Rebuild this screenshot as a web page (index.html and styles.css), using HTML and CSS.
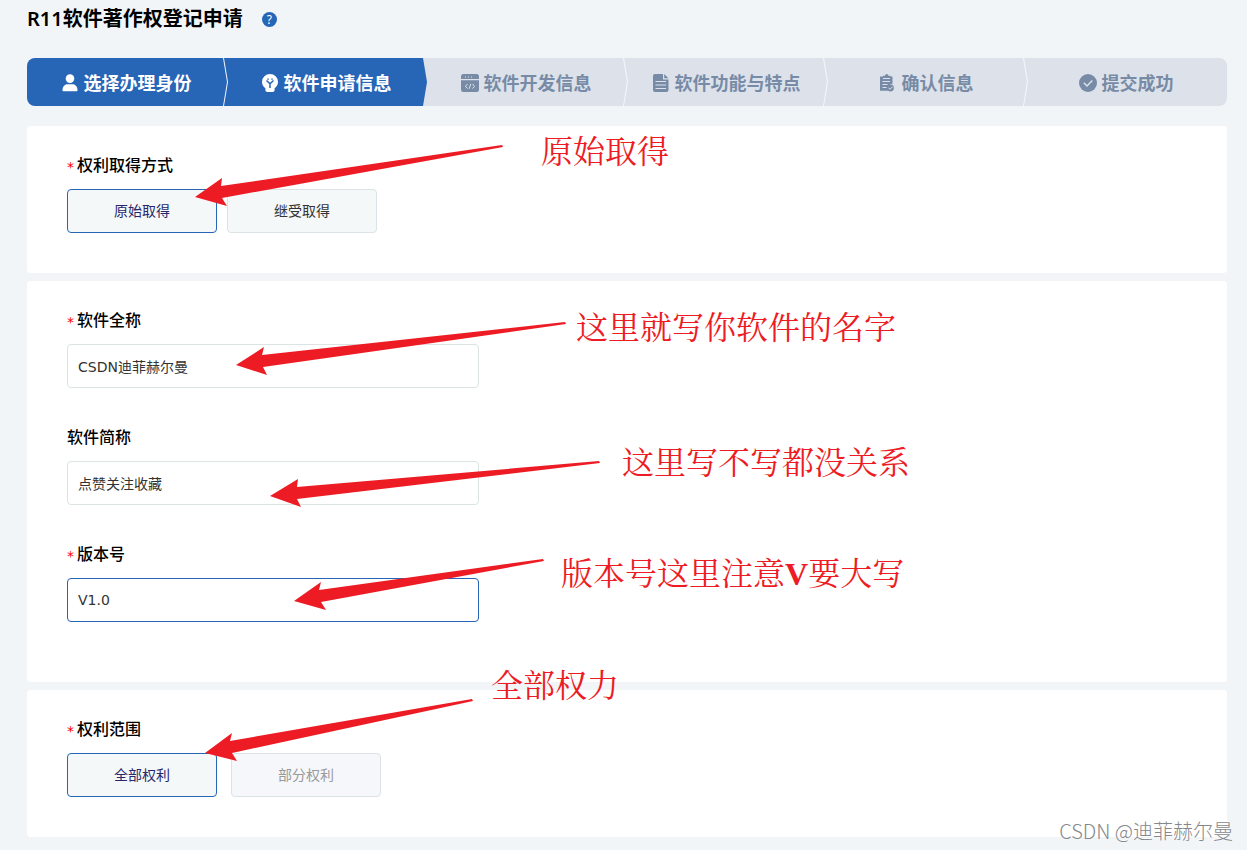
FILE: index.html
```html
<!DOCTYPE html>
<html lang="zh-CN">
<head>
<meta charset="utf-8">
<meta name="viewport" content="width=device-width, initial-scale=1">
<title>R11软件著作权登记申请</title>
<link rel="stylesheet" href="styles.css">
</head>
<body>
<main class="page">
  <header class="page-head">
    <h1 class="title">R11软件著作权登记申请</h1>
    <button class="help" type="button" aria-label="帮助">?</button>
  </header>

  <ol class="steps">
    <li class="step step-on">
      <svg class="step-icon" viewBox="0 0 18 18" aria-hidden="true"><circle cx="9" cy="4.600" r="4.300"/><path d="M1.500 16.200c0-3.600 2-6 5-6h5c3 0 5 2.400 5 6 0 .7-.4 1.100-1 1.100h-13c-.6 0-1-.4-1-1.100z"/></svg>
      <span>选择办理身份</span>
      <svg class="step-edge" viewBox="0 0 5 48" aria-hidden="true"><path class="edge-line" d="M.5 0 4.500 24 .5 48"/></svg>
    </li>
    <li class="step step-on" aria-current="step">
      <svg class="step-icon" viewBox="0 0 18 18" aria-hidden="true"><path d="M9 0a8 8 0 0 1 8 8c0 2.700-1.300 4.800-3.400 6.200V16c0 1.200-.8 2-2 2H6.400c-1.200 0-2-.8-2-2v-1.800C2.300 12.800 1 10.700 1 8a8 8 0 0 1 8-8z"/><path class="cut cut-bulb" d="M5.500 6.500 9 9.800l3.500-3.300M9 9.800V14M7 4.600v1.200M11 4.600v1.200"/></svg>
      <span>软件申请信息</span>
      <svg class="step-edge" viewBox="0 0 5 48" aria-hidden="true"><path class="edge-next" d="M0 0 4 24 0 48H5V0z"/></svg>
    </li>
    <li class="step">
      <svg class="step-icon" viewBox="0 0 18 18" aria-hidden="true"><path d="M2.500 0h13A2.500 2.500 0 0 1 18 2.500V5H0V2.500A2.500 2.500 0 0 1 2.500 0zM0 6.300h18v9.200a2.500 2.500 0 0 1-2.500 2.500h-13A2.500 2.500 0 0 1 0 15.500z"/><path class="cut" d="M4 3h1M7 3h1M10 3h1M6.500 10 4.500 12.300l2 2.300M11.500 10l2 2.300-2 2.300M9.800 9.800l-1.600 5"/></svg>
      <span>软件开发信息</span>
      <svg class="step-edge" viewBox="0 0 5 48" aria-hidden="true"><path class="edge-line" d="M.5 0 4.500 24 .5 48"/></svg>
    </li>
    <li class="step">
      <svg class="step-icon" viewBox="0 0 18 18" aria-hidden="true"><path d="M3 0h8v5.500h5.500V16a2 2 0 0 1-2 2H3a2 2 0 0 1-2-2V2a2 2 0 0 1 2-2zM12.200 0l4.300 4.300h-4.300z"/><path class="cut" d="M3.500 7.500h10.500M3.500 11h10.500M3.500 14.500h10.500"/></svg>
      <span>软件功能与特点</span>
      <svg class="step-edge" viewBox="0 0 5 48" aria-hidden="true"><path class="edge-line" d="M.5 0 4.500 24 .5 48"/></svg>
    </li>
    <li class="step">
      <svg class="step-icon" viewBox="0 0 18 18" aria-hidden="true"><path d="M1 2.500h3V1.800h2a1.700 1.700 0 0 1 3.400 0h2v.7h2.100v7.300c-2.800.1-4.700 2-4.700 4.400 0 1 .3 1.800.8 2.500H1z"/><path class="cut" d="M4 4.500h7M3.500 7.500h7.500M3.500 10.500h5M3.500 13.500h4"/><circle cx="11.500" cy="14" r="3.400"/><path class="cut" d="m9.500 13.700 1.500 1.600 2.700-2.700"/></svg>
      <span>确认信息</span>
      <svg class="step-edge" viewBox="0 0 5 48" aria-hidden="true"><path class="edge-line" d="M.5 0 4.500 24 .5 48"/></svg>
    </li>
    <li class="step">
      <svg class="step-icon" viewBox="0 0 18 18" aria-hidden="true"><circle cx="9" cy="9" r="9"/><path class="cut cut-check" d="m4.800 8.800 3.200 3.200 5.300-5.500"/></svg>
      <span>提交成功</span>
    </li>
  </ol>

  <div class="cards">
    <section class="card">
      <div class="field" role="group" aria-labelledby="way">
        <div class="label" id="way"><span class="star">*</span>权利取得方式</div>
        <div class="choices">
          <button class="choice chosen" type="button" aria-pressed="true">原始取得</button>
          <button class="choice" type="button" aria-pressed="false">继受取得</button>
        </div>
      </div>
    </section>

    <section class="card card-form">
      <div class="field">
        <label class="label" for="full"><span class="star">*</span>软件全称</label>
        <input class="input" id="full" type="text" value="CSDN迪菲赫尔曼">
      </div>
      <div class="field">
        <label class="label" for="short">软件简称</label>
        <input class="input" id="short" type="text" value="点赞关注收藏">
      </div>
      <div class="field">
        <label class="label" for="version"><span class="star">*</span>版本号</label>
        <input class="input input-active" id="version" type="text" value="V1.0">
      </div>
    </section>

    <section class="card">
      <div class="field" role="group" aria-labelledby="scope">
        <div class="label" id="scope"><span class="star">*</span>权利范围</div>
        <div class="choices choices-wide">
          <button class="choice chosen" type="button" aria-pressed="true">全部权利</button>
          <button class="choice" type="button" disabled>部分权利</button>
        </div>
      </div>
    </section>
  </div>
</main>

<div class="notes">
  <svg class="arrows" width="620" height="780" viewBox="0 0 620 780" aria-hidden="true">
    <path d="M195 197 222 178 221 186 502 145 503 147 222 198 227 206z"/>
    <path d="M236 365 264 347 262 355 565 322 566 324 263 367 267 375z"/>
    <path d="M270 496 298 479 297 487 599 461 600 463 297 499 301 507z"/>
    <path d="M294 601 321 582 319 590 543 559 544 561 321 602 326 610z"/>
    <path d="M205 753 232 733 230 741 472 699 473 701 232 753 237 761z"/>
  </svg>
  <span class="note note-way">原始取得</span>
  <span class="note note-full">这里就写你软件的名字</span>
  <span class="note note-short">这里写不写都没关系</span>
  <span class="note note-version">版本号这里注意<b class="strong">V</b>要大写</span>
  <span class="note note-scope">全部权力</span>
</div>
<div class="watermark">CSDN @迪菲赫尔曼</div>
</body>
</html>
```

FILE: styles.css
```css
* {
  box-sizing: border-box;
}

body {
  position: relative;
  margin: 0;
  background: #f2f5f8;
  color: #000;
  font-family: "Noto Sans", "Noto Sans CJK SC", sans-serif;
}

.page {
  padding: 0 20px 13px 27px;
}

.page-head {
  display: flex;
  align-items: center;
  gap: 19px;
  height: 38px;
}

.title {
  margin: 0;
  font-size: 20px;
  line-height: 28px;
  font-weight: 600;
}

.help {
  width: 15px;
  height: 15px;
  padding: 0;
  border: 0;
  border-radius: 50%;
  background: #2765b7;
  color: #fff;
  font: 12px/15px "Noto Sans", sans-serif;
}

.steps {
  display: flex;
  margin: 20px 0;
  padding: 0;
  overflow: hidden;
  border-radius: 8px;
  list-style: none;
}

.step {
  position: relative;
  display: flex;
  flex: 1;
  align-items: center;
  justify-content: center;
  gap: 5px;
  height: 48px;
  padding: 2px 2px 0 0;
  background: #dde2ea;
  color: #778ba6;
  font-size: 18px;
  line-height: 24px;
  font-weight: 700;
  white-space: nowrap;
}

.step-on {
  background: #2765b7;
  color: #fff;
}

.step-icon {
  width: 18px;
  height: 18px;
  fill: currentColor;
}

.cut {
  fill: none;
  stroke: #dde2ea;
  stroke-width: 1;
}

.step-on .cut {
  stroke: #2765b7;
}

.cut-bulb {
  stroke-width: 1.5;
}

.cut-check {
  stroke-width: 1.5;
}

.step-edge {
  position: absolute;
  z-index: 1;
  top: 0;
  right: -1px;
  width: 5px;
  height: 48px;
}

.edge-line {
  fill: none;
  stroke: #f5f8fb;
}

.edge-next {
  fill: #dde2ea;
}

.cards {
  display: grid;
  gap: 8px;
}

.card {
  padding: 26px 40px 40px;
  border-radius: 4px;
  background: #fff;
}

.card-form {
  display: grid;
  gap: 36px;
  padding-bottom: 60px;
}

.field {
  display: grid;
  gap: 13px;
}

.label {
  display: flex;
  align-items: center;
  gap: 3px;
  font-size: 16px;
  line-height: 24px;
  font-weight: 500;
  font-family: "Noto Sans CJK SC", sans-serif;
}

.star {
  padding-top: 6px;
  color: #f00;
  font: 14px/18px "DejaVu Sans", sans-serif;
}

.choices {
  display: flex;
  gap: 10px;
}

.choices-wide {
  gap: 14px;
}

.choice {
  width: 150px;
  height: 44px;
  padding: 0 0 2px;
  border: 1px solid #dce3e6;
  border-radius: 4px;
  background: #f4f8f9;
  color: #333;
  font: 14px/20px "Noto Sans CJK SC", sans-serif;
}

.chosen {
  border-color: #2765b7;
  color: #27276b;
}

.choice:disabled {
  background: #f5f7fa;
  color: #999;
}

.input {
  width: 412px;
  max-width: 100%;
  height: 44px;
  padding: 0 10px;
  border: 1px solid #dce3e3;
  border-radius: 4px;
  background: #fff;
  color: #333;
  font: 14px/20px "DejaVu Sans", "Noto Sans CJK SC", sans-serif;
}

.input-active {
  border-color: #2765b7;
}

.notes {
  position: absolute;
  top: 0;
  left: 0;
  pointer-events: none;
}

.arrows {
  display: block;
  fill: #ed1c24;
}

.note {
  position: absolute;
  color: #ed1c24;
  font: 400 32px/40px "Liberation Serif", "Noto Serif CJK SC", "Noto Sans CJK SC", serif;
  white-space: nowrap;
}

.strong {
  font-weight: 700;
}

.note-way {
  top: 132px;
  left: 541px;
}

.note-full {
  top: 308px;
  left: 576px;
}

.note-short {
  top: 443px;
  left: 622px;
}

.note-version {
  top: 554px;
  left: 561px;
}

.note-scope {
  top: 666px;
  left: 491px;
}

.watermark {
  position: absolute;
  right: 14px;
  bottom: 5px;
  color: #85888b;
  font: 300 20px/28px "Noto Sans CJK SC", sans-serif;
  text-shadow: -1px -1px 0 #fff;
  pointer-events: none;
}
```
